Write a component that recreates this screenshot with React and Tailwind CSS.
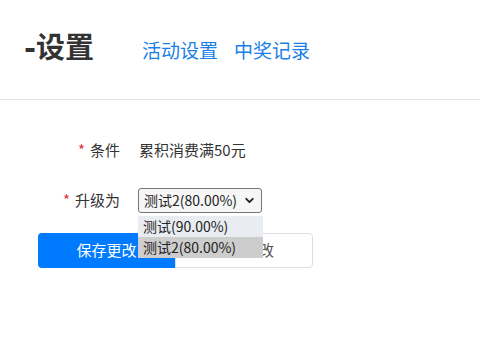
import { ChevronDown } from 'lucide-react'

function Label({ children }) {
  return (
    <div className="w-[82px] text-right text-[15px] text-[#333] shrink-0">
      <span className="text-[#dc3545] mr-[5px]">*</span>
      {children}
    </div>
  )
}

export default function App() {
  return (
    <div className="w-[480px] h-[352px] bg-white overflow-hidden font-['Noto_Sans_CJK_SC',sans-serif]">
      <header className="h-[100px] border-b border-[#e2e2e2] flex items-center pl-[24px] pb-[2px]">
        <h1 className="text-[29px] font-bold text-[#333] leading-none font-['DejaVu_Sans','Noto_Sans_CJK_SC',sans-serif]">-设置</h1>
        <nav className="flex gap-[16px] ml-[48px] mt-[3px] text-[19px] text-[#1a7fe8]">
          <a>活动设置</a>
          <a>中奖记录</a>
        </nav>
      </header>

      <div className="pl-[38px] pt-[38px] relative">
        <div className="flex items-center h-[24px]">
          <Label>条件</Label>
          <div className="ml-[19px] text-[15px] text-[#333]">累积消费满50元</div>
        </div>

        <div className="flex items-center h-[26px] mt-[25px]">
          <Label>升级为</Label>
          <div className="ml-[18px] w-[124px] h-[25px] border border-[#767676] rounded-[3px] bg-[#f6f6f6] flex items-center justify-between pl-[5px] pr-[5px] text-[14px] text-[#222]">
            <span className="whitespace-nowrap">测试2(80.00%)</span>
            <ChevronDown className="w-[13px] h-[13px] shrink-0" strokeWidth={3.5} />
          </div>
        </div>

        <div className="flex mt-[20px]">
          <button className="w-[137px] h-[35px] bg-[#007bff] text-white text-[15px] rounded-l-[4px]">保存更改</button>
          <button className="w-[138px] h-[35px] bg-white border border-[#dadde2] text-[#555] text-[15px] rounded-r-[4px]">放弃更改</button>
        </div>

        <div className="absolute left-[138px] top-[116px] w-[125px] text-[14px] text-[#222]">
          <div className="h-[21px] bg-[#e9edf2] pl-[5px] leading-[21px] whitespace-nowrap">测试(90.00%)</div>
          <div className="h-[21px] bg-[#cdcdcd] pl-[5px] leading-[21px] whitespace-nowrap">测试2(80.00%)</div>
        </div>
      </div>
    </div>
  )
}
